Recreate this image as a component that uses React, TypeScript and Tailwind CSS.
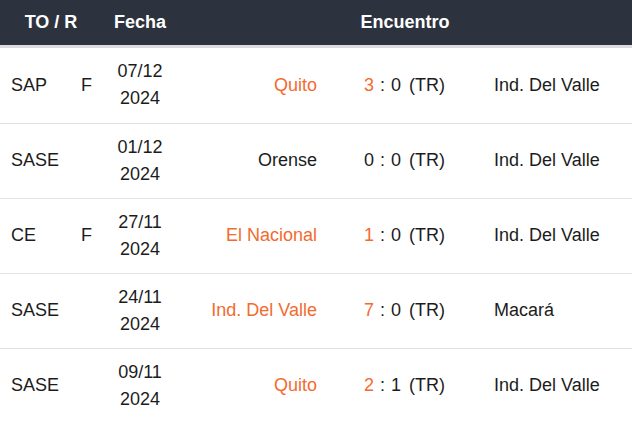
import React from 'react';

type Match = {
  to: string;
  r: string;
  date: string;
  year: string;
  home: string;
  away: string;
  hg: number;
  ag: number;
  homeWin: boolean;
};

const matches: Match[] = [
  { to: 'SAP', r: 'F', date: '07/12', year: '2024', home: 'Quito', away: 'Ind. Del Valle', hg: 3, ag: 0, homeWin: true },
  { to: 'SASE', r: '', date: '01/12', year: '2024', home: 'Orense', away: 'Ind. Del Valle', hg: 0, ag: 0, homeWin: false },
  { to: 'CE', r: 'F', date: '27/11', year: '2024', home: 'El Nacional', away: 'Ind. Del Valle', hg: 1, ag: 0, homeWin: true },
  { to: 'SASE', r: '', date: '24/11', year: '2024', home: 'Ind. Del Valle', away: 'Macará', hg: 7, ag: 0, homeWin: true },
  { to: 'SASE', r: '', date: '09/11', year: '2024', home: 'Quito', away: 'Ind. Del Valle', hg: 2, ag: 1, homeWin: true },
];

const Row = ({ m }: { m: Match }) => (
  <tr className="h-[75px] border-b border-[#e2e2e2] last:border-b-0">
    <td className="pl-[11px]">{m.to}</td>
    <td className="pl-[11px]">{m.r}</td>
    <td className="text-center leading-[27px]">
      {m.date}
      <br />
      {m.year}
    </td>
    <td className={`text-right pr-[10px] ${m.homeWin ? 'text-[#f26b2f]' : ''}`}>{m.home}</td>
    <td className="pl-[37px] whitespace-nowrap">
      <span className={m.homeWin ? 'text-[#f26b2f]' : ''}>{m.hg}</span>
      <span className="mx-[6px]">:</span>
      <span>{m.ag}</span>
      <span className="ml-[8px]">(TR)</span>
    </td>
    <td className="pl-[10px]">{m.away}</td>
  </tr>
);

const App = () => {
  return (
    <div className="w-[632px] h-[421px] overflow-hidden bg-white font-['Liberation_Sans',Arial,sans-serif] text-[18px] text-[#1c1c1c]">
      <div className="h-[45px] bg-[#2d333e] text-white font-bold flex items-center border-b-[3px] border-[#dcdcdc] box-content">
        <div className="w-[102px] text-center">TO / R</div>
        <div className="w-[76px] text-center">Fecha</div>
        <div className="flex-1 text-center">Encuentro</div>
      </div>
      <table className="w-[632px] table-fixed border-collapse">
        <colgroup>
          <col className="w-[70px]" />
          <col className="w-[32px]" />
          <col className="w-[76px]" />
          <col className="w-[149px]" />
          <col className="w-[157px]" />
          <col />
        </colgroup>
        <tbody>
          {matches.map((m, i) => (
            <Row key={i} m={m} />
          ))}
        </tbody>
      </table>
    </div>
  );
};

export default App;
